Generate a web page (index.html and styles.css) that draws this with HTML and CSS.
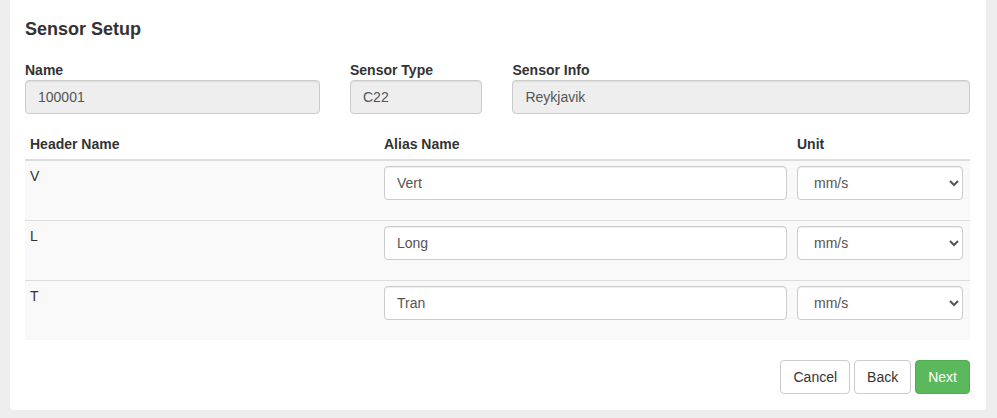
FILE: index.html
```html
<!DOCTYPE html>
<html>
<head>
<meta charset="utf-8">
<link rel="stylesheet" href="styles.css">
</head>
<body>
<div class="panel">
  <h4 class="title">Sensor Setup</h4>
  <div class="info-row">
    <div class="form-group">
      <label class="label">Name</label>
      <input class="form-control" type="text" value="100001" disabled>
    </div>
    <div class="form-group">
      <label class="label">Sensor Type</label>
      <input class="form-control" type="text" value="C22" disabled>
    </div>
    <div class="form-group">
      <label class="label">Sensor Info</label>
      <input class="form-control" type="text" value="Reykjavik" disabled>
    </div>
  </div>
  <table class="table">
    <thead>
      <tr>
        <th class="col-header">Header Name</th>
        <th class="col-alias">Alias Name</th>
        <th class="col-unit">Unit</th>
      </tr>
    </thead>
    <tbody>
      <tr>
        <td>V</td>
        <td><div class="cell-group"><input class="form-control" type="text" value="Vert"></div></td>
        <td><div class="cell-group"><select class="form-control unit-select"><option>mm/s</option></select></div></td>
      </tr>
      <tr>
        <td>L</td>
        <td><div class="cell-group"><input class="form-control" type="text" value="Long"></div></td>
        <td><div class="cell-group"><select class="form-control unit-select"><option>mm/s</option></select></div></td>
      </tr>
      <tr>
        <td>T</td>
        <td><div class="cell-group"><input class="form-control" type="text" value="Tran"></div></td>
        <td><div class="cell-group"><select class="form-control unit-select"><option>mm/s</option></select></div></td>
      </tr>
    </tbody>
  </table>
  <div class="actions">
    <button class="btn">Cancel</button>
    <button class="btn">Back</button>
    <button class="btn btn-success">Next</button>
  </div>
</div>
</body>
</html>
```
FILE: styles.css
```css
* { box-sizing: border-box; }
html, body { margin: 0; padding: 0; }
body {
  background: #eeeeee;
  font-family: "Liberation Sans", Arial, sans-serif;
  font-size: 14px;
  line-height: 20px;
  color: #333333;
}
.panel {
  background: #ffffff;
  margin: 0 11px 0 10px;
  padding: 19px 16px 16px 15px;
  border-radius: 0 0 4px 4px;
}
.title {
  margin: 0 0 21px 0;
  font-size: 18px;
  line-height: 20px;
  font-weight: bold;
  color: #333333;
}
.info-row {
  display: grid;
  grid-template-columns: calc((100% + 30px) / 3 - 30px) calc((100% + 30px) / 6 - 30px) 1fr;
  column-gap: 30px;
}
.form-group { margin-bottom: 15px; }
.label {
  display: block;
  font-weight: bold;
  margin-bottom: 0;
}
.form-control {
  display: block;
  width: 100%;
  height: 34px;
  padding: 6px 12px;
  font-family: "Liberation Sans", Arial, sans-serif;
  font-size: 14px;
  line-height: 20px;
  color: #555555;
  background: #ffffff;
  border: 1px solid #cccccc;
  border-radius: 4px;
  box-shadow: inset 0 1px 1px rgba(0,0,0,0.075);
  margin: 0;
}
.form-control:disabled {
  background: #eeeeee;
  opacity: 1;
  color: #555555;
}
.table {
  width: 100%;
  border-collapse: collapse;
  border-spacing: 0;
  margin-bottom: 20px;
}
.table th {
  text-align: left;
  font-weight: bold;
  padding: 5px;
  border-bottom: 2px solid #dddddd;
  vertical-align: bottom;
}
.table td {
  padding: 5px;
  vertical-align: top;
  background: #f9f9f9;
}
.table tbody tr + tr td { border-top: 1px solid #dddddd; }
.col-header { width: 354px; }
.col-alias { width: 413px; }
.cell-group { margin-bottom: 15px; }
.unit-select { width: 166px; }
.actions {
  display: flex;
  justify-content: flex-end;
  gap: 4px;
}
.btn {
  height: 34px;
  padding: 6px 12px;
  font-family: "Liberation Sans", Arial, sans-serif;
  font-size: 14px;
  line-height: 20px;
  color: #333333;
  background: #ffffff;
  border: 1px solid #cccccc;
  border-radius: 4px;
  margin: 0;
}
.btn-success {
  color: #ffffff;
  background: #5cb85c;
  border-color: #4cae4c;
}
```
